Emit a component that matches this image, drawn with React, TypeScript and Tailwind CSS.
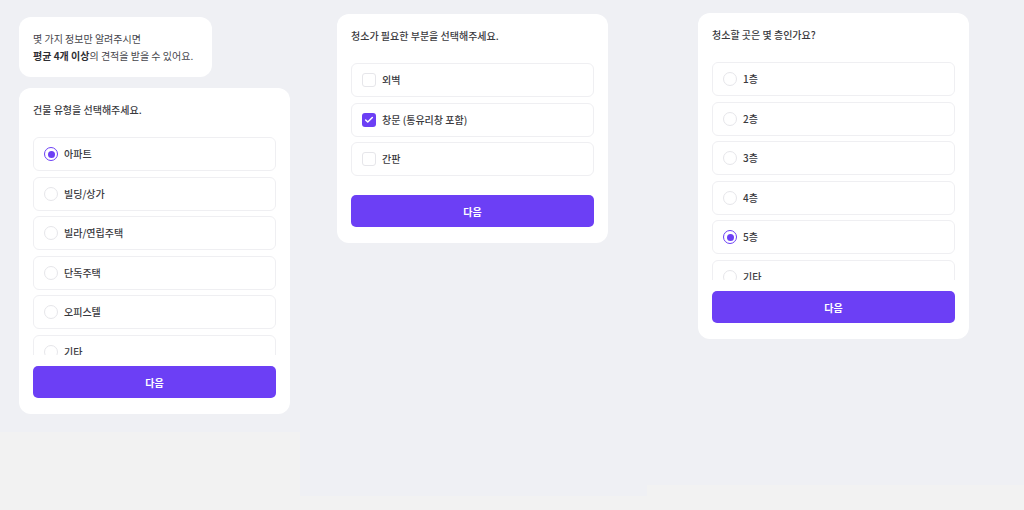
import { Check } from "lucide-react";

const font = { fontFamily: '"Noto Sans CJK KR", "Noto Sans", sans-serif' };

type Opt = { label: string; selected?: boolean };

function Radio({ on }: { on?: boolean }) {
  if (on) {
    return (
      <span className="flex h-[14px] w-[14px] shrink-0 items-center justify-center rounded-full border-[1.5px] border-[#6c3ff5]">
        <span className="h-[7px] w-[7px] rounded-full bg-[#6c3ff5]" />
      </span>
    );
  }
  return <span className="h-[14px] w-[14px] shrink-0 rounded-full border border-[#e6e6ea] bg-white" />;
}

function Box({ on }: { on?: boolean }) {
  if (on) {
    return (
      <span className="flex h-[14px] w-[14px] shrink-0 items-center justify-center rounded-[3px] bg-[#6c3ff5]">
        <Check size={10} strokeWidth={3.5} color="#ffffff" />
      </span>
    );
  }
  return <span className="h-[14px] w-[14px] shrink-0 rounded-[3px] border border-[#e6e6ea] bg-white" />;
}

function Option({ opt, kind }: { opt: Opt; kind: "radio" | "check" }) {
  return (
    <div className="flex h-[34px] shrink-0 items-center gap-[6px] rounded-[6px] border border-[#efeff2] bg-white pl-[10px]">
      {kind === "radio" ? <Radio on={opt.selected} /> : <Box on={opt.selected} />}
      <span className="text-[10px] font-medium leading-none text-[#3a3a3e]">{opt.label}</span>
    </div>
  );
}

function Card({
  title,
  options,
  kind,
  scroll,
}: {
  title: string;
  options: Opt[];
  kind: "radio" | "check";
  scroll?: boolean;
}) {
  return (
    <div className="w-[271px] rounded-[12px] bg-white px-[14px] pt-[14px] pb-4">
      <p className="text-[10px] leading-[16px] font-medium text-[#3a3a3e]">{title}</p>
      <div
        className={
          scroll
            ? "mt-[19px] flex h-[218px] flex-col gap-[5.6px] overflow-hidden"
            : "mt-[19px] flex flex-col gap-[5.6px]"
        }
      >
        {options.map((o) => (
          <Option key={o.label} opt={o} kind={kind} />
        ))}
      </div>
      <button
        className={
          (scroll ? "mt-[11px] " : "mt-[19px] ") +
          "flex h-[32px] w-full items-center justify-center rounded-[5px] bg-[#6c3ff5] text-[10px] font-bold text-white"
        }
      >
        다음
      </button>
    </div>
  );
}

export default function App() {
  return (
    <div className="flex h-[510px] w-[1024px] items-start bg-[#f2f2f2]" style={font}>
      {/* column 1 */}
      <div className="flex h-[432px] w-[300px] flex-col bg-[#eff0f4] pt-[17px] pl-[19px]">
        <div className="w-[193px] rounded-[12px] bg-white px-[14px] py-[13px] text-[10px] leading-[17px] text-[#46464c]">
          <p>몇 가지 정보만 알려주시면</p>
          <p>
            <span className="font-bold text-[#2e2e33]">평균 4개 이상</span>의 견적을 받을 수 있어요.
          </p>
        </div>
        <div className="mt-[11px]">
          <Card
            title="건물 유형을 선택해주세요."
            kind="radio"
            scroll
            options={[
              { label: "아파트", selected: true },
              { label: "빌딩/상가" },
              { label: "빌라/연립주택" },
              { label: "단독주택" },
              { label: "오피스텔" },
              { label: "기타" },
            ]}
          />
        </div>
      </div>

      {/* column 2 */}
      <div className="h-[496px] w-[347px] bg-[#eff0f4] pt-[14px] pl-[37px]">
        <Card
          title="청소가 필요한 부분을 선택해주세요."
          kind="check"
          options={[{ label: "외벽" }, { label: "창문 (통유리창 포함)", selected: true }, { label: "간판" }]}
        />
      </div>

      {/* column 3 */}
      <div className="h-[485px] w-[377px] bg-[#eff0f4] pt-[13px] pl-[51px]">
        <Card
          title="청소할 곳은 몇 층인가요?"
          kind="radio"
          scroll
          options={[
            { label: "1층" },
            { label: "2층" },
            { label: "3층" },
            { label: "4층" },
            { label: "5층", selected: true },
            { label: "기타" },
          ]}
        />
      </div>
    </div>
  );
}
